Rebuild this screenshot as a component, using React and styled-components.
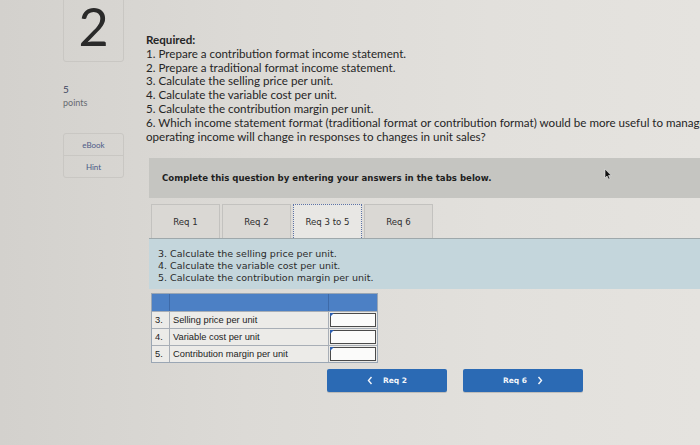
import React from "react";
import styled, { createGlobalStyle } from "styled-components";

const GlobalStyle = createGlobalStyle`
  html, body {
    margin: 0;
    padding: 0;
    overflow: hidden;
  }
  body {
    width: 700px;
    height: 445px;
    background: linear-gradient(90deg, #d3d1cd 0%, #dcdad6 35%, #e2e0dc 70%, #e5e3df 100%);
    font-family: "Lato", "Open Sans", sans-serif;
  }
`;

const Page = styled.div`
  display: flex;
  align-items: flex-start;
  padding-left: 63px;
  gap: 22px;
  width: 900px;
`;

const Side = styled.div`
  width: 61px;
  display: flex;
  flex-direction: column;
`;

const NumberBox = styled.div`
  height: 82px;
  margin-top: -20px;
  border: 1px solid #c9c7c3;
  border-radius: 3px;
  display: flex;
  align-items: flex-end;
  justify-content: center;
  font-family: "Lato", sans-serif;
  font-weight: 400;
  font-size: 52px;
  line-height: 1;
  color: #2a2a2a;
  padding-bottom: 9px;
  box-sizing: border-box;
`;

const Points = styled.div`
  margin-top: 21px;
  font-size: 10px;
  line-height: 13px;
  color: #3b4660;

  span {
    display: block;
    color: #666a70;
    font-size: 9px;
  }
`;

const SideMenu = styled.div`
  margin-top: 24px;
  border: 1px solid #c9c7c3;
  border-radius: 3px;
  display: flex;
  flex-direction: column;
`;

const SideItem = styled.div`
  height: 21px;
  display: flex;
  align-items: center;
  justify-content: center;
  font-size: 8px;
  color: #4b5a86;
  border-top: ${(p) => (p.first ? "none" : "1px solid #c9c7c3")};
`;

const Main = styled.div`
  flex: 1;
  display: flex;
  flex-direction: column;
`;

const Required = styled.div`
  margin-top: 33px;
  font-size: 11.6px;
  line-height: 13.8px;
  color: #262626;
  white-space: nowrap;

  b {
    font-weight: 700;
  }
`;

const TaskArea = styled.div`
  margin-left: 3px;
  margin-top: 15px;
  display: flex;
  flex-direction: column;
  position: relative;
`;

const Banner = styled.div`
  height: 40px;
  background: #c5c5c1;
  display: flex;
  align-items: center;
  padding-left: 13px;
  font-family: "DejaVu Sans", Verdana, sans-serif;
  font-weight: 700;
  font-size: 8.6px;
  color: #1e1e1e;
`;

const Cursor = styled.svg`
  position: absolute;
  left: 455px;
  top: 10px;
`;

const Tabs = styled.div`
  display: flex;
  gap: 2px;
  margin-top: 6px;
  padding-left: 2px;
`;

const Tab = styled.div`
  width: 69px;
  height: 34px;
  box-sizing: border-box;
  display: flex;
  align-items: center;
  justify-content: center;
  font-family: "DejaVu Sans", Verdana, sans-serif;
  font-size: 8.6px;
  color: #2e2e2e;
  background: ${(p) => (p.active ? "#e8e7e4" : "#dad8d4")};
  border: ${(p) => (p.active ? "1px dotted #5d73a6" : "1px solid #c3c2bf")};
  border-bottom: none;
`;

const Info = styled.div`
  height: 51px;
  box-sizing: border-box;
  background: #c4d6dc;
  border-top: 1px solid #9ea8ab;
  padding: 9px 0 0 9px;
  font-family: "DejaVu Sans", Verdana, sans-serif;
  font-size: 9.5px;
  line-height: 12px;
  color: #2b2b2b;
`;

const Table = styled.div`
  margin: 4px 0 0 2px;
  width: 225px;
  display: grid;
  grid-template-columns: 17px 159px 49px;
  border: 1px solid #9aa6b4;
  font-family: "Liberation Sans", Arial, sans-serif;
  font-size: 9.3px;
  color: #222;
`;

const HeadCell = styled.div`
  height: 17px;
  background: #4c80c5;
  border-left: ${(p) => (p.first ? "none" : "1px solid #3e6aa8")};
`;

const Cell = styled.div`
  height: 17px;
  box-sizing: border-box;
  display: flex;
  align-items: center;
  padding-left: 3px;
  background: #ecebe8;
  border-top: 1px solid #a8aeb6;
  border-left: ${(p) => (p.first ? "none" : "1px solid #a8aeb6")};
`;

const InputCell = styled.div`
  height: 17px;
  box-sizing: border-box;
  background: #ecebe8;
  border-top: 1px solid #a8aeb6;
  border-left: 1px solid #a8aeb6;
  padding: 1px;
  display: flex;
  position: relative;

  &::before {
    content: "";
    position: absolute;
    left: 1px;
    top: 1px;
    border-top: 4px solid #2d5fb0;
    border-right: 4px solid transparent;
  }
`;

const InputBox = styled.div`
  flex: 1;
  background: #fbfbfa;
  border: 1.5px solid #4a4a4a;
`;

const Nav = styled.div`
  display: flex;
  gap: 16px;
  margin: 6px 0 0 178px;
`;

const NavButton = styled.div`
  width: 120px;
  height: 23px;
  background: #2b6ab4;
  border-radius: 2px;
  display: flex;
  align-items: center;
  justify-content: center;
  gap: 10px;
  color: #f4f6fa;
  font-family: "DejaVu Sans", Verdana, sans-serif;
  font-weight: 700;
  font-size: 7.5px;
  box-shadow: 0 1px 0 rgba(0, 0, 0, 0.15);
`;

const Chevron = ({ dir }) => (
  <svg width="6" height="9" viewBox="0 0 6 9">
    <path
      d={dir === "left" ? "M4.5 1L1.5 4.5L4.5 8" : "M1.5 1L4.5 4.5L1.5 8"}
      stroke="#f4f6fa"
      strokeWidth="1.4"
      fill="none"
    />
  </svg>
);

const rows = [
  ["3.", "Selling price per unit"],
  ["4.", "Variable cost per unit"],
  ["5.", "Contribution margin per unit"],
];

const tabs = ["Req 1", "Req 2", "Req 3 to 5", "Req 6"];

export default function App() {
  return (
    <>
      <GlobalStyle />
      <Page>
        <Side>
          <NumberBox>2</NumberBox>
          <Points>
            5<span>points</span>
          </Points>
          <SideMenu>
            <SideItem first>eBook</SideItem>
            <SideItem>Hint</SideItem>
          </SideMenu>
        </Side>

        <Main>
          <Required>
            <b>Required:</b>
            <br />
            1. Prepare a contribution format income statement.
            <br />
            2. Prepare a traditional format income statement.
            <br />
            3. Calculate the selling price per unit.
            <br />
            4. Calculate the variable cost per unit.
            <br />
            5. Calculate the contribution margin per unit.
            <br />
            6. Which income statement format (traditional format or contribution format) would be more useful to managers in estimating how much
            <br />
            operating income will change in responses to changes in unit sales?
          </Required>

          <TaskArea>
            <Banner>Complete this question by entering your answers in the tabs below.</Banner>
            <Cursor width="8" height="12" viewBox="0 0 8 12">
              <path d="M1 1L1 10L3 8L4.6 11.2L6 10.5L4.5 7.5L7.2 7.5Z" fill="#111" stroke="#eee" strokeWidth="0.6" />
            </Cursor>

            <Tabs>
              {tabs.map((t) => (
                <Tab key={t} active={t === "Req 3 to 5"}>
                  {t}
                </Tab>
              ))}
            </Tabs>

            <Info>
              3. Calculate the selling price per unit.
              <br />
              4. Calculate the variable cost per unit.
              <br />
              5. Calculate the contribution margin per unit.
            </Info>

            <Table>
              <HeadCell first />
              <HeadCell />
              <HeadCell />
              {rows.map(([n, label]) => (
                <React.Fragment key={n}>
                  <Cell first>{n}</Cell>
                  <Cell>{label}</Cell>
                  <InputCell>
                    <InputBox />
                  </InputCell>
                </React.Fragment>
              ))}
            </Table>

            <Nav>
              <NavButton>
                <Chevron dir="left" />
                Req 2
              </NavButton>
              <NavButton>
                Req 6
                <Chevron dir="right" />
              </NavButton>
            </Nav>
          </TaskArea>
        </Main>
      </Page>
    </>
  );
}
